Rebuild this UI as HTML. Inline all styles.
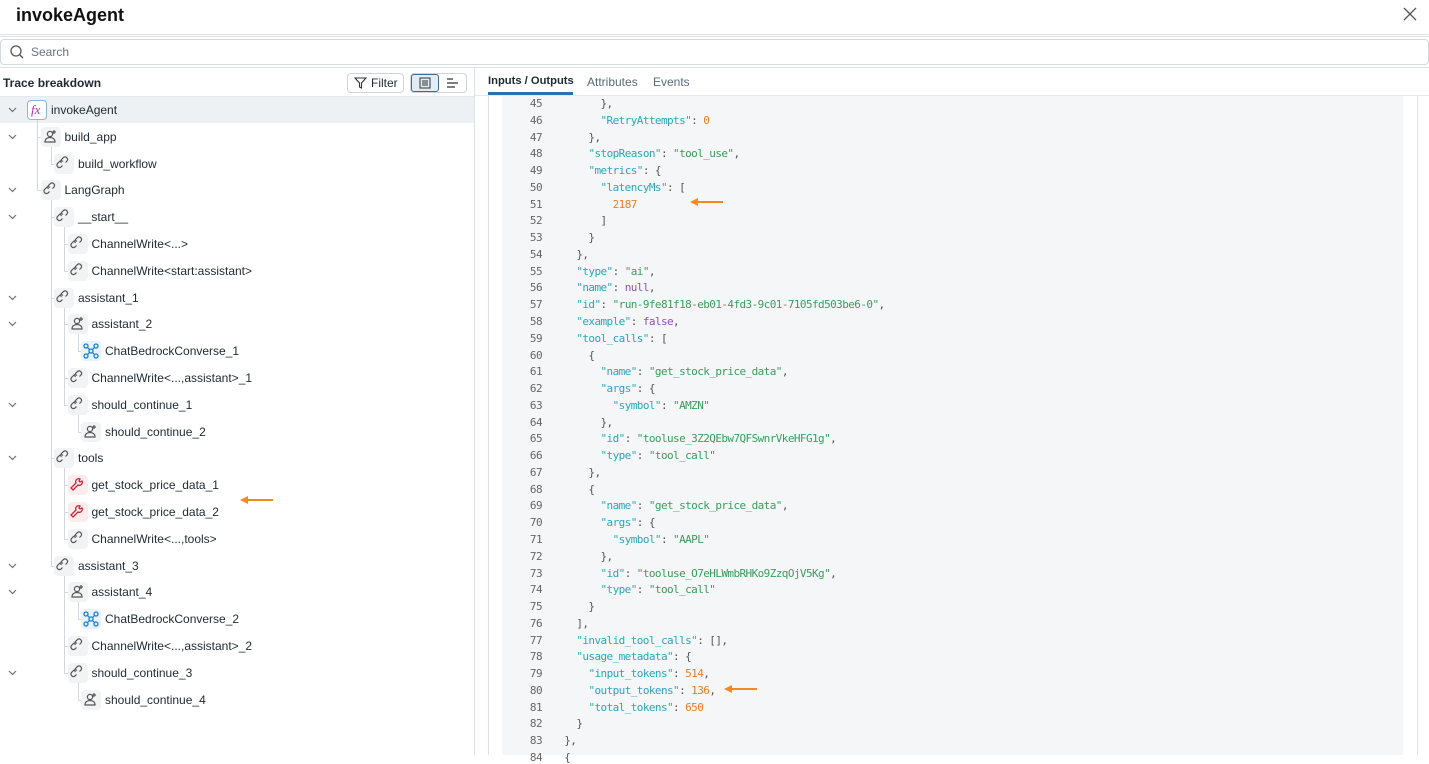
<!DOCTYPE html>
<html><head><meta charset="utf-8"><style>
*{box-sizing:border-box;margin:0;padding:0}
body{width:1429px;height:755px;overflow:hidden;background:#fff;font-family:"Liberation Sans",sans-serif;color:#1f2933;position:relative}
.a{position:absolute}
.code{font-family:"DejaVu Sans Mono","Liberation Mono",monospace;font-size:11px;letter-spacing:-0.58px;white-space:pre;color:#555}
.k{color:#2aa7b8}.s{color:#3a9d5d}.n{color:#f07c1e}.p{color:#8a4fc0}
.row{position:absolute;left:0;height:27px;font-size:12px;color:#1f2933;line-height:27px;width:474px}
.ic{position:absolute;width:20px;height:20px;border-radius:4px;background:#f2f3f5;top:3px}
.vl{position:absolute;width:1px;background:#d4d8dd}
</style></head><body>
<div class="a" style="left:16px;top:5px;font-size:18px;font-weight:bold;color:#111">invokeAgent</div>
<svg class="a" style="left:1403px;top:7px" width="14" height="14"><path d="M1 1L13 13M13 1L1 13" stroke="#555" stroke-width="1.3"/></svg>
<div class="a" style="left:0;top:34px;width:1429px;height:3px;border-top:1px solid #dfe3e8;border-bottom:1px solid #dfe3e8"></div>
<div class="a" style="left:0;top:39px;width:1429px;height:26px;border:1px solid #d5dae0;border-radius:4px"></div>
<svg class="a" style="left:10px;top:45px" width="14" height="14"><circle cx="6" cy="6" r="5" fill="none" stroke="#555" stroke-width="1.3"/><path d="M10 10L13 13" stroke="#555" stroke-width="1.3"/></svg>
<div class="a" style="left:31px;top:45px;font-size:12px;color:#6b7280">Search</div>
<div class="a" style="left:0;top:67px;width:1429px;height:1px;background:#dfe3e8"></div>
<div class="a" style="left:474px;top:68px;width:1px;height:687px;background:#dfe3e8"></div>
<div class="a" style="left:3px;top:76px;font-size:12px;font-weight:bold">Trace breakdown</div>
<div class="a" style="left:347px;top:73px;width:57px;height:20px;border:1px solid #cfd5db;border-radius:4px;font-size:12px;line-height:18px;padding-left:23px">Filter</div>
<svg class="a" style="left:354px;top:77px" width="13" height="12"><path d="M1 1H12L7.5 6V11L5.5 10V6Z" fill="none" stroke="#333" stroke-width="1.1"/></svg>
<div class="a" style="left:410px;top:73px;width:57px;height:20px;border:1px solid #cfd5db;border-radius:4px"></div>
<div class="a" style="left:411px;top:74px;width:28px;height:18px;background:#e3ebf4;border:1px solid #3e6a99;border-radius:3px"></div>
<svg class="a" style="left:419px;top:77px" width="12" height="12"><rect x="1" y="1" width="10" height="10" fill="none" stroke="#333"/><path d="M3 4H9M3 6H9M3 8H9" stroke="#333"/></svg>
<svg class="a" style="left:446px;top:77px" width="13" height="12"><path d="M1 2H7M1 6H12M1 10H9" stroke="#333" stroke-width="1.2"/></svg>
<div class="a" style="left:0;top:96px;width:474px;height:1px;background:#e5e8ec"></div>
<div class="a" style="left:0;top:97px;width:474px;height:26px;background:#eef1f4"></div>
<div id="tree"></div>

<div class="a" style="left:488px;top:75px;font-size:11.2px;font-weight:bold;color:#1f2933">Inputs / Outputs</div>
<div class="a" style="left:488px;top:92px;width:85px;height:3px;background:#2f6fad"></div>
<div class="a" style="left:587px;top:75px;font-size:12px;color:#5a6a7a">Attributes</div>
<div class="a" style="left:653px;top:75px;font-size:12px;color:#5a6a7a">Events</div>
<div class="a" style="left:475px;top:95px;width:954px;height:1px;background:#e5e8ec"></div>
<div class="a" style="left:488px;top:96px;width:1px;height:659px;background:#dfe3e8"></div>
<div class="a" style="left:1417px;top:96px;width:1px;height:659px;background:#dfe3e8"></div>
<div class="a" style="left:502px;top:96px;width:901px;height:659px;background:#f5f6f8"></div>
<div id="code"></div>
<svg class="a" style="left:690px;top:197px" width="34" height="10"><path d="M33 5H3" stroke="#f28a1e" stroke-width="2"/><path d="M0 5L8 1V9Z" fill="#f28a1e"/></svg>
<svg class="a" style="left:724px;top:684px" width="34" height="10"><path d="M33 5H3" stroke="#f28a1e" stroke-width="2"/><path d="M0 5L8 1V9Z" fill="#f28a1e"/></svg>
<svg class="a" style="left:240px;top:495px" width="34" height="10"><path d="M33 5H3" stroke="#f28a1e" stroke-width="2"/><path d="M0 5L8 1V9Z" fill="#f28a1e"/></svg>
<script>
var T=[["invokeAgent",0,1,"fx"],["build_app",1,1,"u"],["build_workflow",2,0,"l"],["LangGraph",1,1,"l"],["__start__",2,1,"l"],["ChannelWrite<...>",3,0,"l"],["ChannelWrite<start:assistant>",3,0,"l"],["assistant_1",2,1,"l"],["assistant_2",3,1,"u"],["ChatBedrockConverse_1",4,0,"b"],["ChannelWrite<...,assistant>_1",3,0,"l"],["should_continue_1",3,1,"l"],["should_continue_2",4,0,"u"],["tools",2,1,"l"],["get_stock_price_data_1",3,0,"w"],["get_stock_price_data_2",3,0,"w"],["ChannelWrite<...,tools>",3,0,"l"],["assistant_3",2,1,"l"],["assistant_4",3,1,"u"],["ChatBedrockConverse_2",4,0,"b"],["ChannelWrite<...,assistant>_2",3,0,"l"],["should_continue_3",3,1,"l"],["should_continue_4",4,0,"u"]];
var icons={
l:'<path d="M8.5 11.5l-1.5 1.5a2.5 2.5 0 0 1-3.5-3.5l2-2a2.5 2.5 0 0 1 3.5 0M11.5 8.5l1.5-1.5a2.5 2.5 0 0 0-3.5-3.5l-2 2a2.5 2.5 0 0 0 0 3.5" fill="none" stroke="#555" stroke-width="1.2"/>',
u:'<circle cx="9" cy="7" r="2.6" fill="none" stroke="#555" stroke-width="1.2"/><path d="M4 15c0-3 2.2-4.5 5-4.5s5 1.5 5 4.5z" fill="none" stroke="#555" stroke-width="1.2"/><path d="M13 3v4M11 5h4" stroke="#555" stroke-width="1.2"/>',
w:'<path d="M5 15l5-5a3 3 0 0 0 4-4l-2 1-1-1 1-2a3 3 0 0 0-4 4l-5 5z" fill="none" stroke="#c8283c" stroke-width="1.3"/>',
b:'<circle cx="5" cy="5" r="2" fill="none" stroke="#1a7fc4" stroke-width="1.3"/><circle cx="15" cy="5" r="2" fill="none" stroke="#1a7fc4" stroke-width="1.3"/><circle cx="5" cy="15" r="2" fill="none" stroke="#1a7fc4" stroke-width="1.3"/><circle cx="15" cy="15" r="2" fill="none" stroke="#1a7fc4" stroke-width="1.3"/><circle cx="10" cy="10" r="2" fill="none" stroke="#1a7fc4" stroke-width="1.3"/><path d="M6.5 6.5l2 2M13.5 6.5l-2 2M6.5 13.5l2-2M13.5 13.5l-2-2" stroke="#1a7fc4" stroke-width="1.2"/>',
fx:'<text x="4" y="14" font-family="Liberation Serif" font-style="italic" font-size="13" fill="#c02ab0">fx</text>'};
var h='';
for(var i=0;i<T.length;i++){var t=T[i],y=97+i*26.8,cx=37+t[1]*13.5;
 var bg=t[3]=='w'?'#fdecee':t[3]=='b'?'#e7f2fb':t[3]=='fx'?'#fff':'#f2f3f5';
 var bd=t[3]=='fx'?'border:1px solid #8ab6e0;':'';
 h+='<div class="row" style="top:'+y+'px">'+(t[2]?'<svg class="a" style="left:8px;top:10px" width="9" height="6"><path d="M1 1L4.5 4.5L8 1" fill="none" stroke="#6b7280" stroke-width="1.2"/></svg>':'')+
 '<div class="ic" style="left:'+(cx-10)+'px;background:'+bg+';'+bd+'"><svg width="20" height="20" style="position:absolute;left:'+(bd?-1:0)+'px;top:'+(bd?-1:0)+'px">'+icons[t[3]]+'</svg></div>'+
 '<span style="position:absolute;left:'+(cx+14)+'px">'+t[0].replace(/</g,'&lt;').replace(/>/g,'&gt;')+'</span></div>';
 if(t[2]){var last=i;for(var j=i+1;j<T.length&&T[j][1]>t[1];j++)if(T[j][1]==t[1]+1)last=j;
  var y1=y+23,y2=97+last*26.8+13;h+='<div class="vl" style="left:'+cx+'px;top:'+y1+'px;height:'+(y2-y1)+'px"></div>';
  for(var j=i+1;j<=last;j++)if(T[j][1]==t[1]+1){h+='<div class="vl" style="left:'+cx+'px;top:'+(97+j*26.8+13)+'px;height:1px;width:4px"></div>';}}
}
document.getElementById('tree').innerHTML=h;
var C=[
'            },','            <k>"RetryAttempts"</k>: <n>0</n>','          },','          <k>"stopReason"</k>: <s>"tool_use"</s>,','          <k>"metrics"</k>: {','            <k>"latencyMs"</k>: [','              <n>2187</n>','            ]','          }','        },',
'        <k>"type"</k>: <s>"ai"</s>,','        <k>"name"</k>: <p>null</p>,','        <k>"id"</k>: <s>"run-9fe81f18-eb01-4fd3-9c01-7105fd503be6-0"</s>,','        <k>"example"</k>: <p>false</p>,','        <k>"tool_calls"</k>: [','          {','            <k>"name"</k>: <s>"get_stock_price_data"</s>,','            <k>"args"</k>: {','              <k>"symbol"</k>: <s>"AMZN"</s>','            },',
'            <k>"id"</k>: <s>"tooluse_3Z2QEbw7QFSwnrVkeHFG1g"</s>,','            <k>"type"</k>: <s>"tool_call"</s>','          },','          {','            <k>"name"</k>: <s>"get_stock_price_data"</s>,','            <k>"args"</k>: {','              <k>"symbol"</k>: <s>"AAPL"</s>','            },','            <k>"id"</k>: <s>"tooluse_O7eHLWmbRHKo9ZzqOjV5Kg"</s>,','            <k>"type"</k>: <s>"tool_call"</s>',
'          }','        ],','        <k>"invalid_tool_calls"</k>: [],','        <k>"usage_metadata"</k>: {','          <k>"input_tokens"</k>: <n>514</n>,','          <k>"output_tokens"</k>: <n>136</n>,','          <k>"total_tokens"</k>: <n>650</n>','        }','      },','      {'];
var c='';
for(var i=0;i<C.length;i++){var y=97+i*16.77;
 var s=C[i].replace(/<k>/g,'<span class="k">').replace(/<s>/g,'<span class="s">').replace(/<n>/g,'<span class="n">').replace(/<p>/g,'<span class="p">').replace(/<\/[ksnp]>/g,'</span>');
 c+='<div class="a code" style="left:516px;top:'+y+'px;width:26px;text-align:right;color:#666">'+(45+i)+'</div><div class="a code" style="left:528px;top:'+y+'px">'+s+'</div>';}
document.getElementById('code').innerHTML=c;
</script>
</body></html>
